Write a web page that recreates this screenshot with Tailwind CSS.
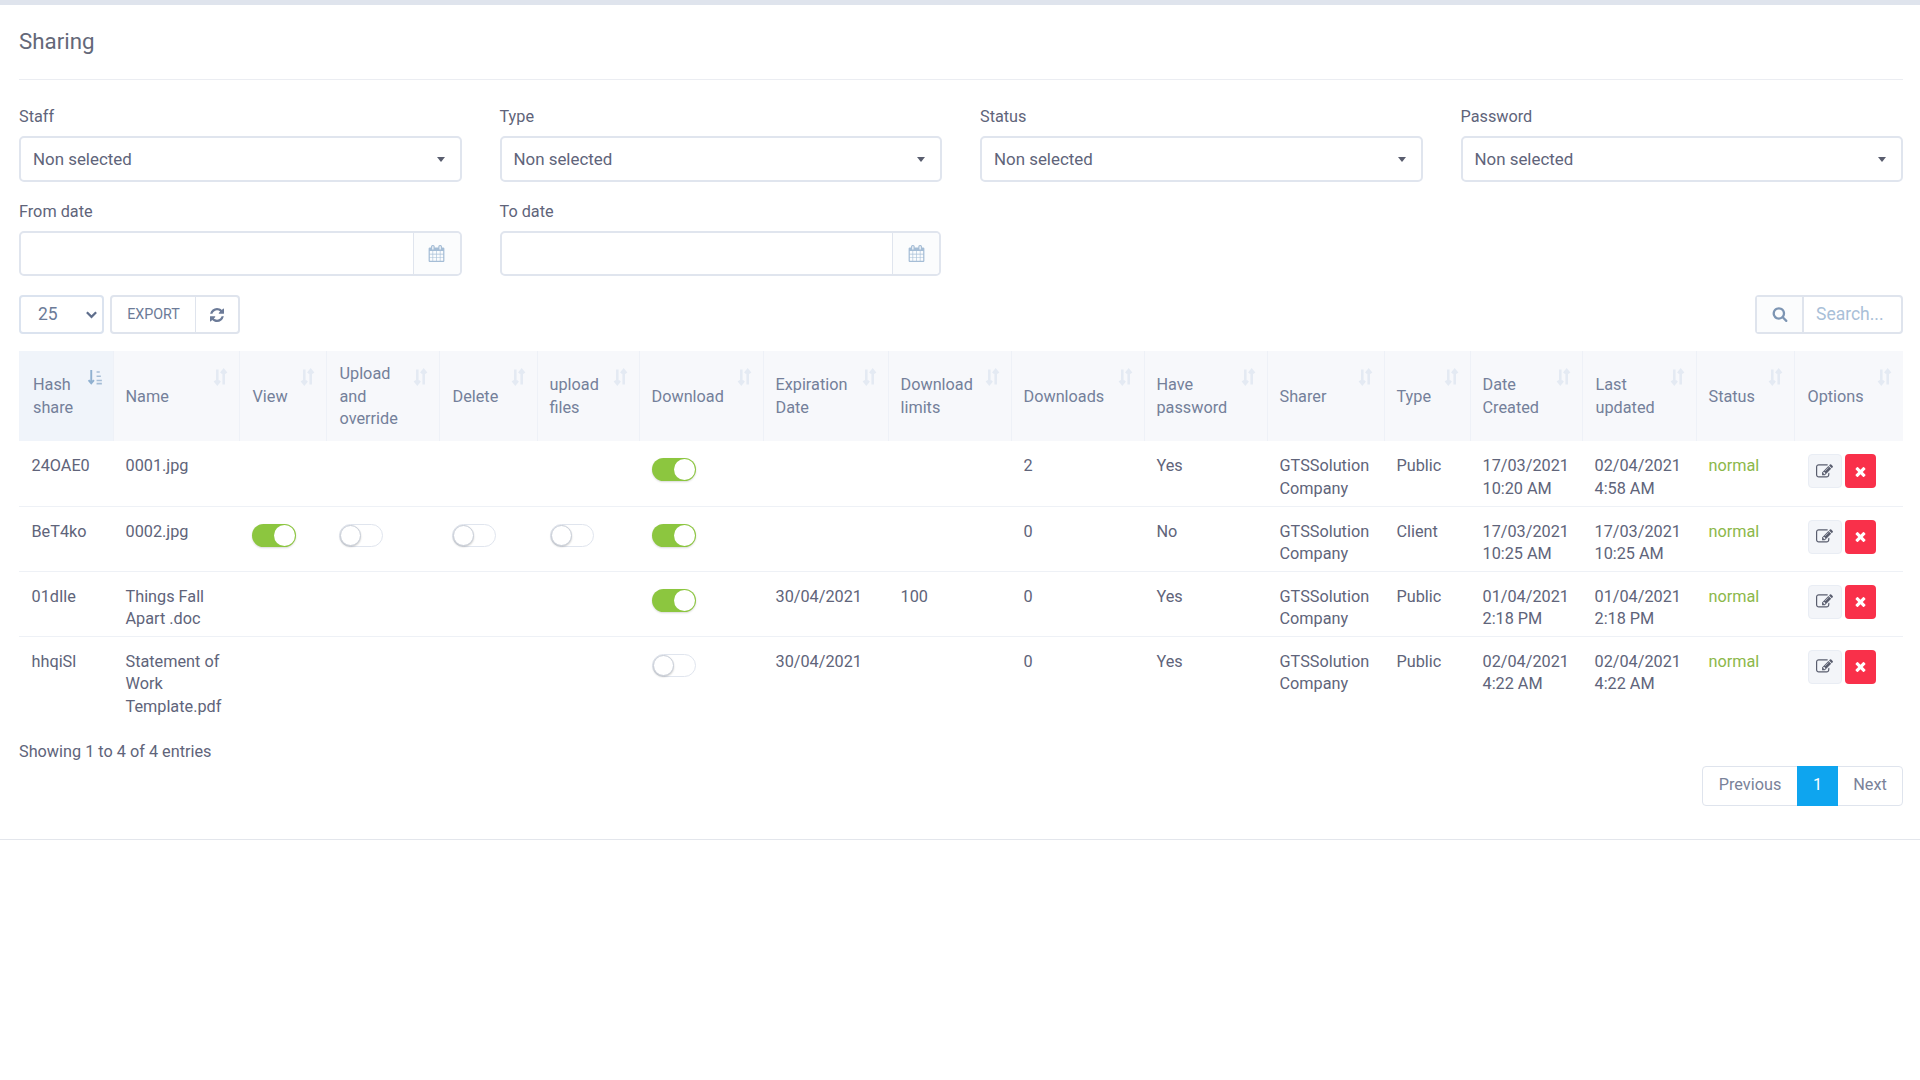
<!DOCTYPE html>
<html>
<head>
<meta charset="utf-8">
<script src="https://cdn.jsdelivr.net/npm/@tailwindcss/browser@4"></script>
</head>
<body class="bg-white font-['Roboto',sans-serif] text-[16.250px] leading-[22.750px] text-[#60647a]">
<div class="h-[5px] bg-[#dfe4ed]"></div>
<div class="pl-[19px] pr-[17px]">
  <div class="h-[75px] border-b border-[#ebedf2] pt-[24px] text-[22.300px] leading-[24px] text-[#646878]">Sharing</div>

  <div class="grid grid-cols-4 gap-x-[38px] pt-[25px]">
    <div><div class="h-[31px] pt-[1px]">Staff</div>
      <div class="h-[46px] flex items-center justify-between rounded-[5px] border-2 border-[#e0e5ee] pl-[12px] pr-[15px] text-[16.900px]"><span>Non selected</span><span class="w-0 h-0 border-x-[4.500px] border-x-transparent border-t-[5px] border-t-[#595d6e]"></span></div></div>
    <div><div class="h-[31px] pt-[1px]">Type</div>
      <div class="h-[46px] flex items-center justify-between rounded-[5px] border-2 border-[#e0e5ee] pl-[12px] pr-[15px] text-[16.900px]"><span>Non selected</span><span class="w-0 h-0 border-x-[4.500px] border-x-transparent border-t-[5px] border-t-[#595d6e]"></span></div></div>
    <div><div class="h-[31px] pt-[1px]">Status</div>
      <div class="h-[46px] flex items-center justify-between rounded-[5px] border-2 border-[#e0e5ee] pl-[12px] pr-[15px] text-[16.900px]"><span>Non selected</span><span class="w-0 h-0 border-x-[4.500px] border-x-transparent border-t-[5px] border-t-[#595d6e]"></span></div></div>
    <div><div class="h-[31px] pt-[1px]">Password</div>
      <div class="h-[46px] flex items-center justify-between rounded-[5px] border-2 border-[#e0e5ee] pl-[12px] pr-[15px] text-[16.900px]"><span>Non selected</span><span class="w-0 h-0 border-x-[4.500px] border-x-transparent border-t-[5px] border-t-[#595d6e]"></span></div></div>
  </div>

  <div class="grid grid-cols-4 gap-x-[38px] pt-[18px]">
    <div><div class="h-[31px] pt-[1px]">From date</div>
      <div class="h-[45px] flex rounded-[5px] border-2 border-[#e0e5ee]"><div class="flex-1"></div>
        <div class="w-[47px] flex items-center justify-center border-l border-[#e0e5ee] bg-[#fbfcfd] rounded-r-[4px]"><svg viewBox="0 0 1792 1792" class="w-[17px] h-[17px] fill-[#a5bdd6]"><path d="M192 1664h288v-288h-288v288zm352 0h320v-288h-320v288zm-352-352h288v-320h-288v320zm352 0h320v-320h-320v320zm-352-384h288v-288h-288v288zm736 736h320v-288h-320v288zm-384-736h320v-288h-320v288zm768 736h288v-288h-288v288zm-384-352h320v-320h-320v320zm-352-864v-288q0-13-9.500-22.500t-22.500-9.500h-64q-13 0-22.500 9.500t-9.500 22.500v288q0 13 9.500 22.500t22.500 9.500h64q13 0 22.500-9.500t9.500-22.500zm736 864h288v-320h-288v320zm-384-384h320v-288h-320v288zm384 0h288v-288h-288v288zm32-480v-288q0-13-9.500-22.500t-22.500-9.500h-64q-13 0-22.500 9.500t-9.500 22.500v288q0 13 9.500 22.500t22.500 9.500h64q13 0 22.500-9.500t9.500-22.500zm384-64v1280q0 52-38 90t-90 38h-1408q-52 0-90-38t-38-90v-1280q0-52 38-90t90-38h128v-96q0-66 47-113t113-47h64q66 0 113 47t47 113v96h384v-96q0-66 47-113t113-47h64q66 0 113 47t47 113v96h128q52 0 90 38t38 90z"/></svg></div></div></div>
    <div class="pr-[1px]"><div class="h-[31px] pt-[1px]">To date</div>
      <div class="h-[45px] flex rounded-[5px] border-2 border-[#e0e5ee]"><div class="flex-1"></div>
        <div class="w-[47px] flex items-center justify-center border-l border-[#e0e5ee] bg-[#fbfcfd] rounded-r-[4px]"><svg viewBox="0 0 1792 1792" class="w-[17px] h-[17px] fill-[#a5bdd6]"><path d="M192 1664h288v-288h-288v288zm352 0h320v-288h-320v288zm-352-352h288v-320h-288v320zm352 0h320v-320h-320v320zm-352-384h288v-288h-288v288zm736 736h320v-288h-320v288zm-384-736h320v-288h-320v288zm768 736h288v-288h-288v288zm-384-352h320v-320h-320v320zm-352-864v-288q0-13-9.500-22.500t-22.500-9.500h-64q-13 0-22.500 9.500t-9.500 22.500v288q0 13 9.500 22.500t22.500 9.500h64q13 0 22.500-9.500t9.500-22.500zm736 864h288v-320h-288v320zm-384-384h320v-288h-320v288zm384 0h288v-288h-288v288zm32-480v-288q0-13-9.500-22.500t-22.500-9.500h-64q-13 0-22.500 9.500t-9.500 22.500v288q0 13 9.500 22.500t22.500 9.500h64q13 0 22.500-9.500t9.500-22.500zm384-64v1280q0 52-38 90t-90 38h-1408q-52 0-90-38t-38-90v-1280q0-52 38-90t90-38h128v-96q0-66 47-113t113-47h64q66 0 113 47t47 113v96h384v-96q0-66 47-113t113-47h64q66 0 113 47t47 113v96h128q52 0 90 38t38 90z"/></svg></div></div></div>
  </div>

  <div class="flex justify-between pt-[19px] h-[75px]">
    <div class="flex gap-[6px] h-[39px]">
      <div class="w-[85px] flex items-center justify-between rounded-[4px] border-2 border-[#dbe3ef] pl-[17px] pr-[4px] text-[#6c7b98] text-[17.500px]"><span>25</span>
        <svg viewBox="0 0 14 14" class="w-[13px] h-[13px] stroke-[#5f6e8c] fill-none"><path d="M2 4.500 L7 9.500 L12 4.500" stroke-width="2.400"/></svg></div>
      <div class="flex rounded-[4px] border-2 border-[#dfe4ed] text-[#6c7b98]">
        <div class="w-[83px] flex items-center justify-center text-[14.300px]">EXPORT</div>
        <div class="w-[43px] flex items-center justify-center border-l border-[#dfe4ed]"><svg viewBox="0 0 1536 1536" class="w-[14px] h-[14px] fill-[#6c7b98]"><path d="M1511 928q0 5-1 7-64 268-268 434.500t-478 166.500q-146 0-282.500-55t-243.500-157l-129 129q-19 19-45 19t-45-19-19-45v-448q0-26 19-45t45-19h448q26 0 45 19t19 45-19 45l-137 137q71 66 161 102t187 36q134 0 250-65t186-179q11-17 53-117 8-23 30-23h192q13 0 22.500 9.500t9.500 22.500zm25-800v448q0 26-19 45t-45 19h-448q-26 0-45-19t-19-45 19-45l138-138q-148-137-349-137-134 0-250 65t-186 179q-11 17-53 117-8 23-30 23h-199q-13 0-22.500-9.500t-9.500-22.500v-7q65-268 270-434.500t480-166.500q146 0 284 55.500t245 156.500l130-129q19-19 45-19t45 19 19 45z"/></svg></div>
      </div>
    </div>
    <div class="flex h-[39px] w-[148px] rounded-[4px] border-2 border-[#dfe4ed]">
      <div class="w-[47px] flex items-center justify-center border-r-2 border-[#dfe4ed] bg-[#fbfcfd]"><svg viewBox="0 0 1792 1792" class="w-[16px] h-[16px] fill-[#7d95b3] -mt-[1px]"><path d="M1216 832q0-185-131.500-316.500t-316.500-131.500-316.500 131.500-131.500 316.500 131.500 316.500 316.500 131.500 316.500-131.500 131.500-316.500zm512 832q0 52-38 90t-90 38q-54 0-90-38l-343-342q-179 124-399 124-143 0-273.500-55.500t-225-150-150-225-55.500-273.500 55.500-273.500 150-225 225-150 273.500-55.500 273.500 55.500 225 150 150 225 55.500 273.500q0 220-124 399l343 343q37 37 37 90z"/></svg></div>
      <div class="flex-1 flex items-center pl-[12px] text-[17.500px] text-[#a9c0d8]">Search...</div>
    </div>
  </div>

  <table class="w-[1884px] table-fixed border-collapse">
    <colgroup>
      <col class="w-[94px]"><col class="w-[126px]"><col class="w-[87px]"><col class="w-[113px]"><col class="w-[98px]"><col class="w-[102px]"><col class="w-[124px]"><col class="w-[125px]"><col class="w-[123px]"><col class="w-[133px]"><col class="w-[123px]"><col class="w-[117px]"><col class="w-[86px]"><col class="w-[112px]"><col class="w-[114px]"><col class="w-[98px]"><col class="w-[109px]">
    </colgroup>
    <thead>
      <tr class="h-[90px] bg-[#f7f8fb] text-left text-[#74809a]">
        <th class="relative bg-[#f0f4fa] pl-[14px] pr-[24px] pt-[2px] font-normal">Hash share<svg viewBox="0 0 16 16" class="absolute right-[9px] top-[18px] w-[17px] h-[17px]"><path d="M4 1v12M1.500 10.500L4 13.500l2.500-3" fill="none" stroke="#8fb0d0" stroke-width="1.800"/><path d="M9 2h3v1.500H9zM9 6h4v1.500H9zM9 10h5v1.500H9zM9 13h5v1.500H9z" fill="#a5bdd6"/></svg></th>
        <th class="relative border-l border-[#eef1f7] pl-[12px] pr-[24px] pt-[2px] font-normal">Name<svg viewBox="0 0 16 16" class="absolute right-[10px] top-[17px] w-[17px] h-[18px]"><path d="M5 1v13M2.500 11.500L5 14.500l2.500-3M11 15V2M8.500 4.500L11 1.500l2.500 3" fill="none" stroke="#e4eaf3" stroke-width="2.400"/></svg></th>
        <th class="relative border-l border-[#eef1f7] pl-[13px] pr-[24px] pt-[2px] font-normal">View<svg viewBox="0 0 16 16" class="absolute right-[10px] top-[17px] w-[17px] h-[18px]"><path d="M5 1v13M2.500 11.500L5 14.500l2.500-3M11 15V2M8.500 4.500L11 1.500l2.500 3" fill="none" stroke="#e4eaf3" stroke-width="2.400"/></svg></th>
        <th class="relative border-l border-[#eef1f7] pl-[13px] pr-[24px] pt-[2px] font-normal">Upload and override<svg viewBox="0 0 16 16" class="absolute right-[10px] top-[17px] w-[17px] h-[18px]"><path d="M5 1v13M2.500 11.500L5 14.500l2.500-3M11 15V2M8.500 4.500L11 1.500l2.500 3" fill="none" stroke="#e4eaf3" stroke-width="2.400"/></svg></th>
        <th class="relative border-l border-[#eef1f7] pl-[13px] pr-[24px] pt-[2px] font-normal">Delete<svg viewBox="0 0 16 16" class="absolute right-[10px] top-[17px] w-[17px] h-[18px]"><path d="M5 1v13M2.500 11.500L5 14.500l2.500-3M11 15V2M8.500 4.500L11 1.500l2.500 3" fill="none" stroke="#e4eaf3" stroke-width="2.400"/></svg></th>
        <th class="relative border-l border-[#eef1f7] pl-[12px] pr-[24px] pt-[2px] font-normal">upload files<svg viewBox="0 0 16 16" class="absolute right-[10px] top-[17px] w-[17px] h-[18px]"><path d="M5 1v13M2.500 11.500L5 14.500l2.500-3M11 15V2M8.500 4.500L11 1.500l2.500 3" fill="none" stroke="#e4eaf3" stroke-width="2.400"/></svg></th>
        <th class="relative border-l border-[#eef1f7] pl-[12px] pr-[24px] pt-[2px] font-normal">Download<svg viewBox="0 0 16 16" class="absolute right-[10px] top-[17px] w-[17px] h-[18px]"><path d="M5 1v13M2.500 11.500L5 14.500l2.500-3M11 15V2M8.500 4.500L11 1.500l2.500 3" fill="none" stroke="#e4eaf3" stroke-width="2.400"/></svg></th>
        <th class="relative border-l border-[#eef1f7] pl-[12px] pr-[24px] pt-[2px] font-normal">Expiration Date<svg viewBox="0 0 16 16" class="absolute right-[10px] top-[17px] w-[17px] h-[18px]"><path d="M5 1v13M2.500 11.500L5 14.500l2.500-3M11 15V2M8.500 4.500L11 1.500l2.500 3" fill="none" stroke="#e4eaf3" stroke-width="2.400"/></svg></th>
        <th class="relative border-l border-[#eef1f7] pl-[12px] pr-[24px] pt-[2px] font-normal">Download limits<svg viewBox="0 0 16 16" class="absolute right-[10px] top-[17px] w-[17px] h-[18px]"><path d="M5 1v13M2.500 11.500L5 14.500l2.500-3M11 15V2M8.500 4.500L11 1.500l2.500 3" fill="none" stroke="#e4eaf3" stroke-width="2.400"/></svg></th>
        <th class="relative border-l border-[#eef1f7] pl-[12px] pr-[24px] pt-[2px] font-normal">Downloads<svg viewBox="0 0 16 16" class="absolute right-[10px] top-[17px] w-[17px] h-[18px]"><path d="M5 1v13M2.500 11.500L5 14.500l2.500-3M11 15V2M8.500 4.500L11 1.500l2.500 3" fill="none" stroke="#e4eaf3" stroke-width="2.400"/></svg></th>
        <th class="relative border-l border-[#eef1f7] pl-[12px] pr-[24px] pt-[2px] font-normal">Have password<svg viewBox="0 0 16 16" class="absolute right-[10px] top-[17px] w-[17px] h-[18px]"><path d="M5 1v13M2.500 11.500L5 14.500l2.500-3M11 15V2M8.500 4.500L11 1.500l2.500 3" fill="none" stroke="#e4eaf3" stroke-width="2.400"/></svg></th>
        <th class="relative border-l border-[#eef1f7] pl-[12px] pr-[24px] pt-[2px] font-normal">Sharer<svg viewBox="0 0 16 16" class="absolute right-[10px] top-[17px] w-[17px] h-[18px]"><path d="M5 1v13M2.500 11.500L5 14.500l2.500-3M11 15V2M8.500 4.500L11 1.500l2.500 3" fill="none" stroke="#e4eaf3" stroke-width="2.400"/></svg></th>
        <th class="relative border-l border-[#eef1f7] pl-[12px] pr-[24px] pt-[2px] font-normal">Type<svg viewBox="0 0 16 16" class="absolute right-[10px] top-[17px] w-[17px] h-[18px]"><path d="M5 1v13M2.500 11.500L5 14.500l2.500-3M11 15V2M8.500 4.500L11 1.500l2.500 3" fill="none" stroke="#e4eaf3" stroke-width="2.400"/></svg></th>
        <th class="relative border-l border-[#eef1f7] pl-[12px] pr-[24px] pt-[2px] font-normal">Date Created<svg viewBox="0 0 16 16" class="absolute right-[10px] top-[17px] w-[17px] h-[18px]"><path d="M5 1v13M2.500 11.500L5 14.500l2.500-3M11 15V2M8.500 4.500L11 1.500l2.500 3" fill="none" stroke="#e4eaf3" stroke-width="2.400"/></svg></th>
        <th class="relative border-l border-[#eef1f7] pl-[13px] pr-[24px] pt-[2px] font-normal">Last updated<svg viewBox="0 0 16 16" class="absolute right-[10px] top-[17px] w-[17px] h-[18px]"><path d="M5 1v13M2.500 11.500L5 14.500l2.500-3M11 15V2M8.500 4.500L11 1.500l2.500 3" fill="none" stroke="#e4eaf3" stroke-width="2.400"/></svg></th>
        <th class="relative border-l border-[#eef1f7] pl-[12px] pr-[24px] pt-[2px] font-normal">Status<svg viewBox="0 0 16 16" class="absolute right-[10px] top-[17px] w-[17px] h-[18px]"><path d="M5 1v13M2.500 11.500L5 14.500l2.500-3M11 15V2M8.500 4.500L11 1.500l2.500 3" fill="none" stroke="#e4eaf3" stroke-width="2.400"/></svg></th>
        <th class="relative border-l border-[#eef1f7] pl-[13px] pr-[24px] pt-[2px] font-normal">Options<svg viewBox="0 0 16 16" class="absolute right-[10px] top-[17px] w-[17px] h-[18px]"><path d="M5 1v13M2.500 11.500L5 14.500l2.500-3M11 15V2M8.500 4.500L11 1.500l2.500 3" fill="none" stroke="#e4eaf3" stroke-width="2.400"/></svg></th>
      </tr>
    </thead>
    <tbody class="[&>tr>td]:align-top [&>tr>td]:pt-[14px] [&>tr>td]:pl-[12.500px] [&>tr>td]:pr-[6px]">
      <tr class="h-[65px] border-b border-[#eef1f6]">
        <td>24OAE0</td><td>0001.jpg</td><td></td><td></td><td></td><td></td>
        <td><div class="mt-[3px] h-[23px] w-[44px] flex justify-end rounded-full bg-[#8cc63f] p-[1px] shadow-[0_1px_2px_rgba(0,0,0,0.15)]"><span class="h-[21px] w-[21px] rounded-full bg-white"></span></div></td>
        <td></td><td></td><td>2</td><td>Yes</td><td>GTSSolution Company</td><td>Public</td><td>17/03/2021 10:20 AM</td><td>02/04/2021 4:58 AM</td><td class="text-[#8cb84a]">normal</td>
        <td><div class="flex gap-[3px] ml-[1px] -mt-[1px]"><span class="w-[34px] h-[34px] flex items-center justify-center rounded-[4px] border border-[#e9edf4] bg-[#f3f5f9]"><svg viewBox="0 0 1792 1792" class="w-[17px] h-[17px] fill-[#595d6e]"><path d="M888 1184l116-116-152-152-116 116v56h96v96h56zm440-720q-16-16-33 1l-350 350q-17 17-1 33t33-1l350-350q17-17 1-33zm80 594v190q0 119-84.500 203.500t-203.500 84.500h-832q-119 0-203.500-84.500t-84.500-203.500v-832q0-119 84.500-203.500t203.500-84.500h832q63 0 117 25 15 7 18 23 3 17-9 29l-49 49q-14 14-32 8-23-6-45-6h-832q-66 0-113 47t-47 113v832q0 66 47 113t113 47h832q66 0 113-47t47-113v-126q0-13 9-22l64-64q15-15 35-9t20 29zm-96-738l288 288-672 672h-288v-288zm444 132l-92 92-288-288 92-92q28-28 68-28t68 28l152 152q28 28 28 68t-28 68z"/></svg></span><span class="w-[31px] h-[34px] flex items-center justify-center rounded-[4px] bg-[#f9304a]"><svg viewBox="0 0 1792 1792" class="w-[15px] h-[15px] fill-white"><path d="M1490 1322q0 40-28 68l-136 136q-28 28-68 28t-68-28l-294-294-294 294q-28 28-68 28t-68-28l-136-136q-28-28-28-68t28-68l294-294-294-294q-28-28-28-68t28-68l136-136q28-28 68-28t68 28l294 294 294-294q28-28 68-28t68 28l136 136q28 28 28 68t-28 68l-294 294 294 294q28 28 28 68z"/></svg></span></div></td>
      </tr>
      <tr class="h-[65px] border-b border-[#eef1f6]">
        <td>BeT4ko</td><td>0002.jpg</td>
        <td><div class="mt-[3px] h-[23px] w-[44px] flex justify-end rounded-full bg-[#8cc63f] p-[1px] shadow-[0_1px_2px_rgba(0,0,0,0.15)]"><span class="h-[21px] w-[21px] rounded-full bg-white"></span></div></td>
        <td><div class="mt-[3px] h-[23px] w-[44px] flex rounded-full border border-[#e0e5ee] bg-white"><span class="h-[21px] w-[21px] rounded-full bg-white border border-[#c8ced8] shadow-[0_1px_2px_rgba(0,0,0,0.2)]"></span></div></td>
        <td><div class="mt-[3px] h-[23px] w-[44px] flex rounded-full border border-[#e0e5ee] bg-white"><span class="h-[21px] w-[21px] rounded-full bg-white border border-[#c8ced8] shadow-[0_1px_2px_rgba(0,0,0,0.2)]"></span></div></td>
        <td><div class="mt-[3px] h-[23px] w-[44px] flex rounded-full border border-[#e0e5ee] bg-white"><span class="h-[21px] w-[21px] rounded-full bg-white border border-[#c8ced8] shadow-[0_1px_2px_rgba(0,0,0,0.2)]"></span></div></td>
        <td><div class="mt-[3px] h-[23px] w-[44px] flex justify-end rounded-full bg-[#8cc63f] p-[1px] shadow-[0_1px_2px_rgba(0,0,0,0.15)]"><span class="h-[21px] w-[21px] rounded-full bg-white"></span></div></td>
        <td></td><td></td><td>0</td><td>No</td><td>GTSSolution Company</td><td>Client</td><td>17/03/2021 10:25 AM</td><td>17/03/2021 10:25 AM</td><td class="text-[#8cb84a]">normal</td>
        <td><div class="flex gap-[3px] ml-[1px] -mt-[1px]"><span class="w-[34px] h-[34px] flex items-center justify-center rounded-[4px] border border-[#e9edf4] bg-[#f3f5f9]"><svg viewBox="0 0 1792 1792" class="w-[17px] h-[17px] fill-[#595d6e]"><path d="M888 1184l116-116-152-152-116 116v56h96v96h56zm440-720q-16-16-33 1l-350 350q-17 17-1 33t33-1l350-350q17-17 1-33zm80 594v190q0 119-84.500 203.500t-203.500 84.500h-832q-119 0-203.500-84.500t-84.500-203.500v-832q0-119 84.500-203.500t203.500-84.500h832q63 0 117 25 15 7 18 23 3 17-9 29l-49 49q-14 14-32 8-23-6-45-6h-832q-66 0-113 47t-47 113v832q0 66 47 113t113 47h832q66 0 113-47t47-113v-126q0-13 9-22l64-64q15-15 35-9t20 29zm-96-738l288 288-672 672h-288v-288zm444 132l-92 92-288-288 92-92q28-28 68-28t68 28l152 152q28 28 28 68t-28 68z"/></svg></span><span class="w-[31px] h-[34px] flex items-center justify-center rounded-[4px] bg-[#f9304a]"><svg viewBox="0 0 1792 1792" class="w-[15px] h-[15px] fill-white"><path d="M1490 1322q0 40-28 68l-136 136q-28 28-68 28t-68-28l-294-294-294 294q-28 28-68 28t-68-28l-136-136q-28-28-28-68t28-68l294-294-294-294q-28-28-28-68t28-68l136-136q28-28 68-28t68 28l294 294 294-294q28-28 68-28t68 28l136 136q28 28 28 68t-28 68l-294 294 294 294q28 28 28 68z"/></svg></span></div></td>
      </tr>
      <tr class="h-[65px] border-b border-[#eef1f6]">
        <td>01dIle</td><td>Things Fall Apart .doc</td><td></td><td></td><td></td><td></td>
        <td><div class="mt-[3px] h-[23px] w-[44px] flex justify-end rounded-full bg-[#8cc63f] p-[1px] shadow-[0_1px_2px_rgba(0,0,0,0.15)]"><span class="h-[21px] w-[21px] rounded-full bg-white"></span></div></td>
        <td>30/04/2021</td><td>100</td><td>0</td><td>Yes</td><td>GTSSolution Company</td><td>Public</td><td>01/04/2021 2:18 PM</td><td>01/04/2021 2:18 PM</td><td class="text-[#8cb84a]">normal</td>
        <td><div class="flex gap-[3px] ml-[1px] -mt-[1px]"><span class="w-[34px] h-[34px] flex items-center justify-center rounded-[4px] border border-[#e9edf4] bg-[#f3f5f9]"><svg viewBox="0 0 1792 1792" class="w-[17px] h-[17px] fill-[#595d6e]"><path d="M888 1184l116-116-152-152-116 116v56h96v96h56zm440-720q-16-16-33 1l-350 350q-17 17-1 33t33-1l350-350q17-17 1-33zm80 594v190q0 119-84.500 203.500t-203.500 84.500h-832q-119 0-203.500-84.500t-84.500-203.500v-832q0-119 84.500-203.500t203.500-84.500h832q63 0 117 25 15 7 18 23 3 17-9 29l-49 49q-14 14-32 8-23-6-45-6h-832q-66 0-113 47t-47 113v832q0 66 47 113t113 47h832q66 0 113-47t47-113v-126q0-13 9-22l64-64q15-15 35-9t20 29zm-96-738l288 288-672 672h-288v-288zm444 132l-92 92-288-288 92-92q28-28 68-28t68 28l152 152q28 28 28 68t-28 68z"/></svg></span><span class="w-[31px] h-[34px] flex items-center justify-center rounded-[4px] bg-[#f9304a]"><svg viewBox="0 0 1792 1792" class="w-[15px] h-[15px] fill-white"><path d="M1490 1322q0 40-28 68l-136 136q-28 28-68 28t-68-28l-294-294-294 294q-28 28-68 28t-68-28l-136-136q-28-28-28-68t28-68l294-294-294-294q-28-28-28-68t28-68l136-136q28-28 68-28t68 28l294 294 294-294q28-28 68-28t68 28l136 136q28 28 28 68t-28 68l-294 294 294 294q28 28 28 68z"/></svg></span></div></td>
      </tr>
      <tr class="h-[83px]">
        <td>hhqiSl</td><td>Statement of Work Template.pdf</td><td></td><td></td><td></td><td></td>
        <td><div class="mt-[3px] h-[23px] w-[44px] flex rounded-full border border-[#e0e5ee] bg-white"><span class="h-[21px] w-[21px] rounded-full bg-white border border-[#c8ced8] shadow-[0_1px_2px_rgba(0,0,0,0.2)]"></span></div></td>
        <td>30/04/2021</td><td></td><td>0</td><td>Yes</td><td>GTSSolution Company</td><td>Public</td><td>02/04/2021 4:22 AM</td><td>02/04/2021 4:22 AM</td><td class="text-[#8cb84a]">normal</td>
        <td><div class="flex gap-[3px] ml-[1px] -mt-[1px]"><span class="w-[34px] h-[34px] flex items-center justify-center rounded-[4px] border border-[#e9edf4] bg-[#f3f5f9]"><svg viewBox="0 0 1792 1792" class="w-[17px] h-[17px] fill-[#595d6e]"><path d="M888 1184l116-116-152-152-116 116v56h96v96h56zm440-720q-16-16-33 1l-350 350q-17 17-1 33t33-1l350-350q17-17 1-33zm80 594v190q0 119-84.500 203.500t-203.500 84.500h-832q-119 0-203.500-84.500t-84.500-203.500v-832q0-119 84.500-203.500t203.500-84.500h832q63 0 117 25 15 7 18 23 3 17-9 29l-49 49q-14 14-32 8-23-6-45-6h-832q-66 0-113 47t-47 113v832q0 66 47 113t113 47h832q66 0 113-47t47-113v-126q0-13 9-22l64-64q15-15 35-9t20 29zm-96-738l288 288-672 672h-288v-288zm444 132l-92 92-288-288 92-92q28-28 68-28t68 28l152 152q28 28 28 68t-28 68z"/></svg></span><span class="w-[31px] h-[34px] flex items-center justify-center rounded-[4px] bg-[#f9304a]"><svg viewBox="0 0 1792 1792" class="w-[15px] h-[15px] fill-white"><path d="M1490 1322q0 40-28 68l-136 136q-28 28-68 28t-68-28l-294-294-294 294q-28 28-68 28t-68-28l-136-136q-28-28-28-68t28-68l294-294-294-294q-28-28-28-68t28-68l136-136q28-28 68-28t68 28l294 294 294-294q28-28 68-28t68 28l136 136q28 28 28 68t-28 68l-294 294 294 294q28 28 28 68z"/></svg></span></div></td>
      </tr>
    </tbody>
  </table>

  <div class="pt-[22px]">Showing 1 to 4 of 4 entries</div>
  <div class="flex justify-end pt-[2px]">
    <div class="flex h-[40px] rounded-[4px] border border-[#dfe4ed] text-[#7a8299]">
      <div class="w-[94px] flex items-center justify-center">Previous</div>
      <div class="w-[41px] flex items-center justify-center bg-[#0ea5ef] text-white -my-[1px]">1</div>
      <div class="w-[64px] flex items-center justify-center">Next</div>
    </div>
  </div>
</div>
<div class="mt-[33px] border-t border-[#e3e6ec]"></div>
</body>
</html>
